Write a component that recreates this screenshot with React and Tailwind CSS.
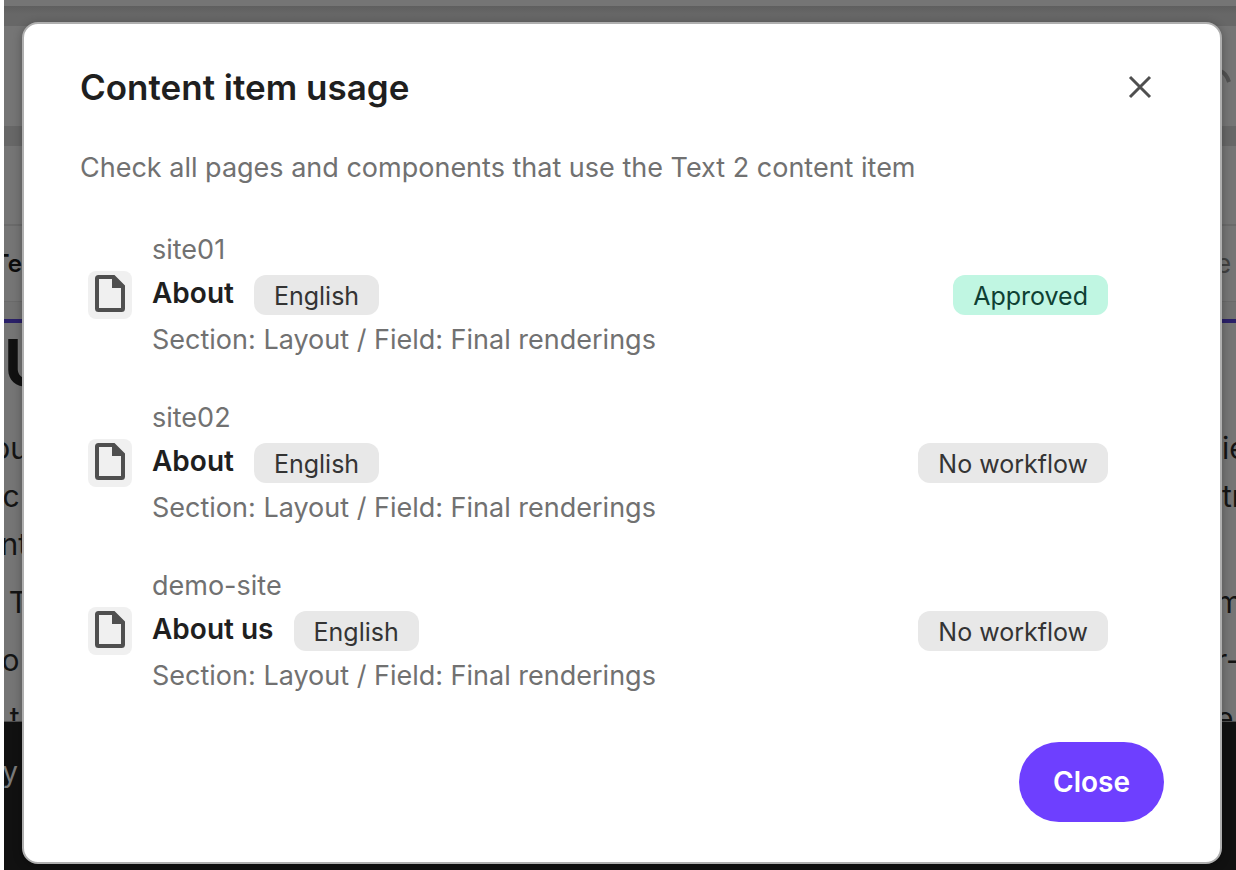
import { useState } from "react";

const USAGES = [
  { site: "site01", page: "About", language: "English", workflow: "Approved", approved: true },
  { site: "site02", page: "About", language: "English", workflow: "No workflow" },
  { site: "demo-site", page: "About us", language: "English", workflow: "No workflow" },
];

// Article lines that stick out on both sides of the dialog
const LINES = [
  { left: "ou", right: "ie" },
  { left: "c ", right: "tr" },
  { left: "nt", right: "" },
];

const BULLETS = [
  { left: "T", right: "m" },
  { left: "o ", right: "r-c" },
  { left: ",t ", right: "e" },
];

function EdgeText({ left, right, bullet }) {
  return (
    <div className="flex h-12 shrink-0 justify-between overflow-hidden text-[30px] leading-[50px] whitespace-pre text-[#141414]">
      <span className="flex w-6 justify-end">{left}</span>
      <span className={bullet ? "w-5" : "w-3.5"}>{right}</span>
    </div>
  );
}

function Editor() {
  return (
    <div aria-hidden="true" className="flex min-h-screen flex-col overflow-hidden bg-[#757575]">
      <div className="h-1.5" />
      <div className="h-5 bg-linear-to-b from-[#5f5f5f] to-[#676767] to-40%" />
      <div className="flex h-[100px] items-center justify-end">
        <svg viewBox="0 0 16 20" className="h-5 w-4" fill="none" stroke="#515151" strokeWidth="4">
          <path d="M0 5C4 6 7 10 9 16" />
        </svg>
      </div>
      <div className="h-5 bg-[#676767]" />
      <div className="h-20 border-b-2 border-[#6a6a6a]" />
      <div className="flex h-[76px] justify-between overflow-hidden border-b border-[#6a6a6a] text-2xl leading-[76px]">
        <span className="flex w-[18px] justify-end font-semibold text-[#0c0c0c]">Te</span>
        <span className="w-5 text-[26px] text-[#414141]">e</span>
      </div>
      <div className="h-[17px] bg-[#717171]" />
      <div className="border-t-4 border-[#2a2068] text-[64px] leading-[80px] font-bold text-[#111111]">U</div>
      <div className="h-5" />
      {LINES.map((line) => (
        <EdgeText key={line.left} {...line} />
      ))}
      <div className="flex h-[154px] flex-col gap-2.5 overflow-hidden pt-2.5">
        {BULLETS.map((line) => (
          <EdgeText key={line.left} bullet {...line} />
        ))}
      </div>
      <div className="flex flex-1 flex-col border-t border-[#505050] bg-[#111111] pt-[26px] text-[28px] leading-[48px] text-[#7a7a7a]">
        <span className="flex w-3.5 justify-end">y</span>
      </div>
    </div>
  );
}

function FileIcon() {
  return (
    <span className="flex h-12 w-11 justify-center rounded-lg bg-[#f0f0f0] pt-1">
      <svg viewBox="0 0 30 38" className="h-[38px] w-[30px]" aria-hidden="true">
        <path
          fill="#4f4f4f"
          fillRule="evenodd"
          d="M3.5 0H19.5L30 10.5V33.5A3.5 3.5 0 0 1 26.5 37H3.5A3.5 3.5 0 0 1 0 33.5V3.5A3.5 3.5 0 0 1 3.5 0ZM4 4V33H26V13H17V4Z"
        />
      </svg>
    </span>
  );
}

function Chip({ children, approved }) {
  return (
    <span
      className={
        approved
          ? "h-10 rounded-xl bg-[#c0f6e2] px-5 text-[25px] leading-[42px] text-[#0e4033]"
          : "h-10 rounded-xl bg-[#e8e8e8] px-5 text-[25px] leading-[42px] text-[#343434]"
      }
    >
      {children}
    </span>
  );
}

function UsageItem({ usage }) {
  return (
    <li className="flex items-center justify-between">
      <div className="flex items-center gap-5">
        <FileIcon />
        <div>
          <p className="text-[27px] leading-[42px] text-[#717171]">{usage.site}</p>
          <div className="flex h-11 items-end gap-5">
            <h3 className="self-start text-[28px] leading-[44px] font-semibold text-[#1f1f1f]">{usage.page}</h3>
            <Chip>{usage.language}</Chip>
          </div>
          <p className="pt-1 text-[27px] leading-[42px] text-[#717171]">
            Section: Layout / Field: Final renderings
          </p>
        </div>
      </div>
      <Chip approved={usage.approved}>{usage.workflow}</Chip>
    </li>
  );
}

export default function App() {
  const [open, setOpen] = useState(true);

  return (
    <div className="relative min-h-screen bg-white pl-1 font-['Inter',sans-serif]">
      <Editor />

      {open && (
        <div className="absolute inset-0 flex items-start justify-center pt-[22px] pr-3.5 pb-1.5 pl-[22px]">
          <div
            role="dialog"
            aria-modal="true"
            aria-labelledby="usage-title"
            className="w-full rounded-2xl border-2 border-[#afafaf] bg-white px-14 pb-10 shadow-[0_2px_10px_rgba(0,0,0,0.3)]"
          >
            <header className="flex items-center justify-between pt-9">
              <h2 id="usage-title" className="text-[35px] leading-[54px] font-semibold text-[#1f1f1f]">
                Content item usage
              </h2>
              <button type="button" aria-label="Close dialog" className="p-3" onClick={() => setOpen(false)}>
                <svg viewBox="0 0 24 24" className="size-6" fill="none" stroke="#4f4f4f" strokeWidth="3">
                  <path d="M2 2L22 22M22 2L2 22" />
                </svg>
              </button>
            </header>

            <p className="pt-[33px] text-[27px] leading-[42px] text-[#717171]">
              Check all pages and components that use the Text 2 content item
            </p>

            <ul className="flex flex-col gap-9 pt-10 pr-14 pl-2">
              {USAGES.map((usage) => (
                <UsageItem key={usage.site} usage={usage} />
              ))}
            </ul>

            <footer className="flex justify-end pt-[45px]">
              <button
                type="button"
                className="rounded-full bg-[#6e3fff] px-[34px] text-[28px] leading-[80px] font-semibold text-white"
                onClick={() => setOpen(false)}
              >
                Close
              </button>
            </footer>
          </div>
        </div>
      )}
    </div>
  );
}
